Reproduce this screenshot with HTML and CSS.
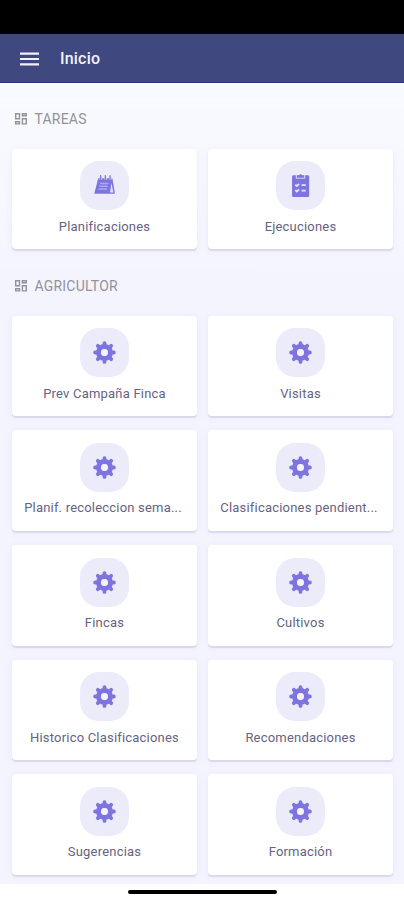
FILE: index.html
```
<!DOCTYPE html>
<html lang="es">
<head>
<meta charset="utf-8">
<title>Inicio</title>
<link rel="stylesheet" href="styles.css">
</head>
<body>
<svg width="0" height="0" class="defs">
  <symbol id="gear" viewBox="0 0 22 22">
    <g stroke="currentColor" stroke-width="3.6" stroke-linecap="round">
      <path d="M11 2v3M11 17v3M2 11h3M17 11h3M4.6 4.6l2 2M15.4 15.4l2 2M4.6 17.4l2-2M15.4 6.6l2-2"/>
    </g>
    <circle cx="11" cy="11" r="5.7" fill="none" stroke="currentColor" stroke-width="4.800"/>
    <circle cx="11" cy="11" r="3.200" fill="#f4f3fd"/>
  </symbol>
  <symbol id="dash" viewBox="0 0 12 12">
    <g fill="none" stroke="currentColor" stroke-width="1.4">
      <path d="M.7.7h3.8v5H.7zM7.4.7h3.9v2H7.4zM.7 8.7h3.8v2.2H.7zM7.4 5.7h3.9v5.2H7.4z"/>
    </g>
  </symbol>
</svg>
<div class="status"></div>
<header class="bar">
  <svg class="menu" viewBox="0 0 20 14"><path d="M0 1.5h20M0 7h20M0 12.5h20" stroke="currentColor" stroke-width="2.1"/></svg>
  <h1>Inicio</h1>
</header>
<main>
  <h2><svg class="dash"><use href="#dash"/></svg>TAREAS</h2>
  <section class="grid">
    <a class="card"><span class="tile"><svg class="icon" viewBox="0 0 22 22">
      <path d="M5 4h13.500l2.500 15H1.200z" fill="currentColor"/>
      <path d="M17.600 8.500l2 9.300h-3.400z" fill="#dedcf8"/>
      <path d="M6.800 9h8M6.100 11.700h8M5.400 14.400h8" stroke="#aea8ee" stroke-width="1.500"/>
      <path d="M7.500 2.500v3M12 2.500v3M16.500 2.500v3" stroke="#ebeafa" stroke-width="2.400"/>
      <path d="M7.300 1.700v3.600M11.800 1.700v3.600M16.300 1.700v3.600" stroke="currentColor" stroke-width="1.300" stroke-linecap="round"/>
    </svg></span><span class="label">Planificaciones</span></a>
    <a class="card"><span class="tile"><svg class="icon" viewBox="0 0 22 22">
      <rect x="2.900" y="1.200" width="16.400" height="20.800" rx="1.200" fill="currentColor"/>
      <path d="M6.500 1h9v3.500h-9z" fill="#d5d2f6"/>
      <path d="M7.600 1.200h1.900a1.600 1.600 0 0 1 3 0h1.900v2.500H7.600z" fill="currentColor"/>
      <path d="M6 10.300l1.400 1.300 2.200-2.200M6 15.500l1.400 1.300 2.200-2.200M12 10.700h4M12 15.900h4" fill="none" stroke="#e7e5fb" stroke-width="1.700"/>
    </svg></span><span class="label">Ejecuciones</span></a>
  </section>
  <h2 class="second"><svg class="dash"><use href="#dash"/></svg>AGRICULTOR</h2>
  <section class="grid">
    <a class="card"><span class="tile"><svg class="icon"><use href="#gear"/></svg></span><span class="label">Prev Campaña Finca</span></a>
    <a class="card"><span class="tile"><svg class="icon"><use href="#gear"/></svg></span><span class="label">Visitas</span></a>
    <a class="card"><span class="tile"><svg class="icon"><use href="#gear"/></svg></span><span class="label cut">Planif. recoleccion sema...</span></a>
    <a class="card"><span class="tile"><svg class="icon"><use href="#gear"/></svg></span><span class="label cut">Clasificaciones pendient...</span></a>
    <a class="card"><span class="tile"><svg class="icon"><use href="#gear"/></svg></span><span class="label">Fincas</span></a>
    <a class="card"><span class="tile"><svg class="icon"><use href="#gear"/></svg></span><span class="label">Cultivos</span></a>
    <a class="card"><span class="tile"><svg class="icon"><use href="#gear"/></svg></span><span class="label">Historico Clasificaciones</span></a>
    <a class="card"><span class="tile"><svg class="icon"><use href="#gear"/></svg></span><span class="label">Recomendaciones</span></a>
    <a class="card"><span class="tile"><svg class="icon"><use href="#gear"/></svg></span><span class="label">Sugerencias</span></a>
    <a class="card"><span class="tile"><svg class="icon"><use href="#gear"/></svg></span><span class="label">Formación</span></a>
  </section>
</main>
<footer><span class="home"></span></footer>
</body>
</html>
```
FILE: styles.css
```
* { box-sizing: border-box; }
body {
  margin: 0;
  height: 900px;
  overflow: hidden;
  display: flex;
  flex-direction: column;
  background: #fff;
  font-family: Roboto, "Liberation Sans", sans-serif;
}
.defs { position: absolute; }
.status { height: 34px; background: #000; flex: none; }
.bar {
  height: 49px;
  flex: none;
  display: flex;
  align-items: center;
  gap: 21px;
  padding: 2px 0 0 19.5px;
  background: #40497f;
  border-bottom: 1.5px solid #2a3677;
  color: #f1f2fb;
}
.menu { width: 19.5px; height: 14px; }
h1 { margin: 0; font-size: 16px; font-weight: 500; letter-spacing: .2px; line-height: 20px; }
main {
  height: 801px;
  flex: none;
  padding: 0 11px 0 12px;
  background: linear-gradient(#f9faff, #f7f8ff 90px, #f4f4ff 200px);
}
h2 {
  margin: 0;
  height: 65.500px;
  padding: 6px 0 0 2.500px;
  display: flex;
  align-items: center;
  gap: 8px;
  font-size: 14px;
  font-weight: 400;
  letter-spacing: .2px;
  color: #929299;
}
h2.second { height: 66.500px; padding-top: 8px; }
.dash { width: 12px; height: 12px; }
.grid {
  display: grid;
  grid-template-columns: 1fr 1fr;
  grid-auto-rows: 100.700px;
  gap: 14px 11px;
}
.card {
  display: flex;
  flex-direction: column;
  align-items: center;
  padding-top: 12.500px;
  background: #fff;
  border-radius: 4px;
  box-shadow: 0 2px 1px #d9d9eb, 0 1px 7px #eaeafa;
}
.tile {
  width: 48.500px;
  height: 49px;
  flex: none;
  display: flex;
  align-items: center;
  justify-content: center;
  border-radius: 19px;
  background: #ecebfa;
  color: #7d74df;
}
.icon { width: 23px; height: 23px; }
.label {
  margin-top: 7.500px;
  font-size: 13px;
  line-height: 18px;
  letter-spacing: .2px;
  white-space: nowrap;
  color: #66637f;
}
.cut { margin-right: 3px; }
footer { flex: 1; display: flex; justify-content: center; padding-top: 6px; }
.home { width: 149px; height: 3.500px; border-radius: 2px; background: #000; }
```
